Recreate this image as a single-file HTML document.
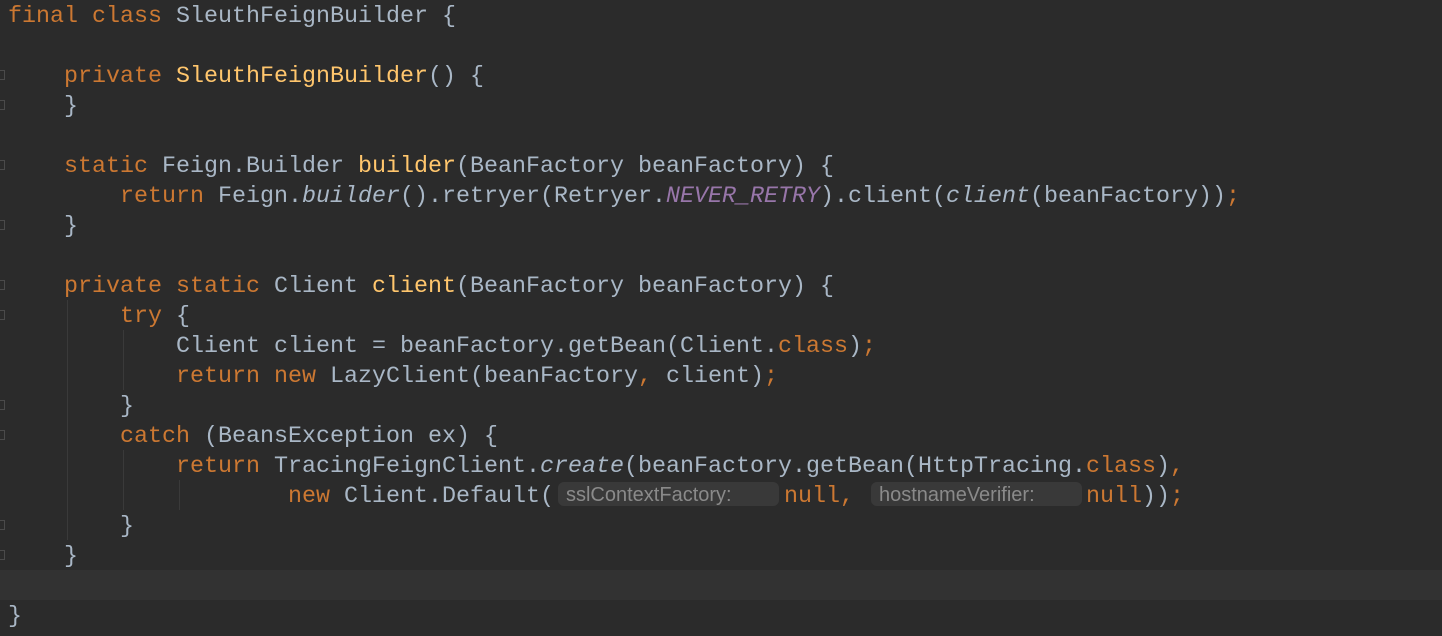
<!DOCTYPE html>
<html><head><style>
html,body{margin:0;padding:0;background:#2b2b2b;width:1442px;height:636px;overflow:hidden}
.l{position:absolute;left:8px;height:30px;line-height:30px;margin-top:2px;font-family:"Liberation Mono",monospace;font-size:23.33px;color:#a9b7c6;white-space:pre}
.k{color:#cc7832}.m{color:#ffc66d}.p{color:#9876aa;font-style:italic}.i{font-style:italic}
.h{display:inline-block;background:#393939;border-radius:6px;color:#8a8a8a;font-family:"Liberation Sans",sans-serif;font-size:20px;line-height:26px;height:24px;vertical-align:middle;padding-left:8px;box-sizing:border-box;position:relative;top:-2px}
.g{position:absolute;width:1px;background:#3a3a3a}
.cur{position:absolute;left:0;top:570px;width:1442px;height:30px;background:#323232}
.f{position:absolute;left:0;width:5px;height:10px;border:1px solid #4a4a4a;border-left:none;box-sizing:border-box}
</style></head><body>
<div class="cur"></div>
<div class="g" style="left:67px;top:300px;height:240px"></div>
<div class="g" style="left:123px;top:330px;height:60px"></div>
<div class="g" style="left:123px;top:450px;height:60px"></div>
<div class="g" style="left:179px;top:480px;height:30px"></div>
<div class="f" style="top:70px"></div><div class="f" style="top:100px"></div>
<div class="f" style="top:160px"></div><div class="f" style="top:220px"></div>
<div class="f" style="top:280px"></div><div class="f" style="top:310px"></div>
<div class="f" style="top:400px"></div><div class="f" style="top:430px"></div>
<div class="f" style="top:520px"></div><div class="f" style="top:550px"></div>
<div class="l" style="top:0"><span class="k">final class </span>SleuthFeignBuilder {</div>
<div class="l" style="top:60px">    <span class="k">private </span><span class="m">SleuthFeignBuilder</span>() {</div>
<div class="l" style="top:90px">    }</div>
<div class="l" style="top:150px">    <span class="k">static </span>Feign.Builder <span class="m">builder</span>(BeanFactory beanFactory) {</div>
<div class="l" style="top:180px">        <span class="k">return </span>Feign.<span class="i">builder</span>().retryer(Retryer.<span class="p">NEVER_RETRY</span>).client(<span class="i">client</span>(beanFactory))<span class="k">;</span></div>
<div class="l" style="top:210px">    }</div>
<div class="l" style="top:270px">    <span class="k">private static </span>Client <span class="m">client</span>(BeanFactory beanFactory) {</div>
<div class="l" style="top:300px">        <span class="k">try </span>{</div>
<div class="l" style="top:330px">            Client client = beanFactory.getBean(Client.<span class="k">class</span>)<span class="k">;</span></div>
<div class="l" style="top:360px">            <span class="k">return new </span>LazyClient(beanFactory<span class="k">, </span>client)<span class="k">;</span></div>
<div class="l" style="top:390px">        }</div>
<div class="l" style="top:420px">        <span class="k">catch </span>(BeansException ex) {</div>
<div class="l" style="top:450px">            <span class="k">return </span>TracingFeignClient.<span class="i">create</span>(beanFactory.getBean(HttpTracing.<span class="k">class</span>)<span class="k">,</span></div>
<div class="l" style="top:480px">                    <span class="k">new </span>Client.Default(<span class="h" style="width:221px;margin-left:4px">sslContextFactory:</span><span style="display:inline-block;width:5px"></span><span class="k">null, </span><span class="h" style="width:211px;margin-left:3px">hostnameVerifier:</span><span style="display:inline-block;width:4px"></span><span class="k">null</span>))<span class="k">;</span></div>
<div class="l" style="top:510px">        }</div>
<div class="l" style="top:540px">    }</div>
<div class="l" style="top:600px">}</div>
</body></html>
